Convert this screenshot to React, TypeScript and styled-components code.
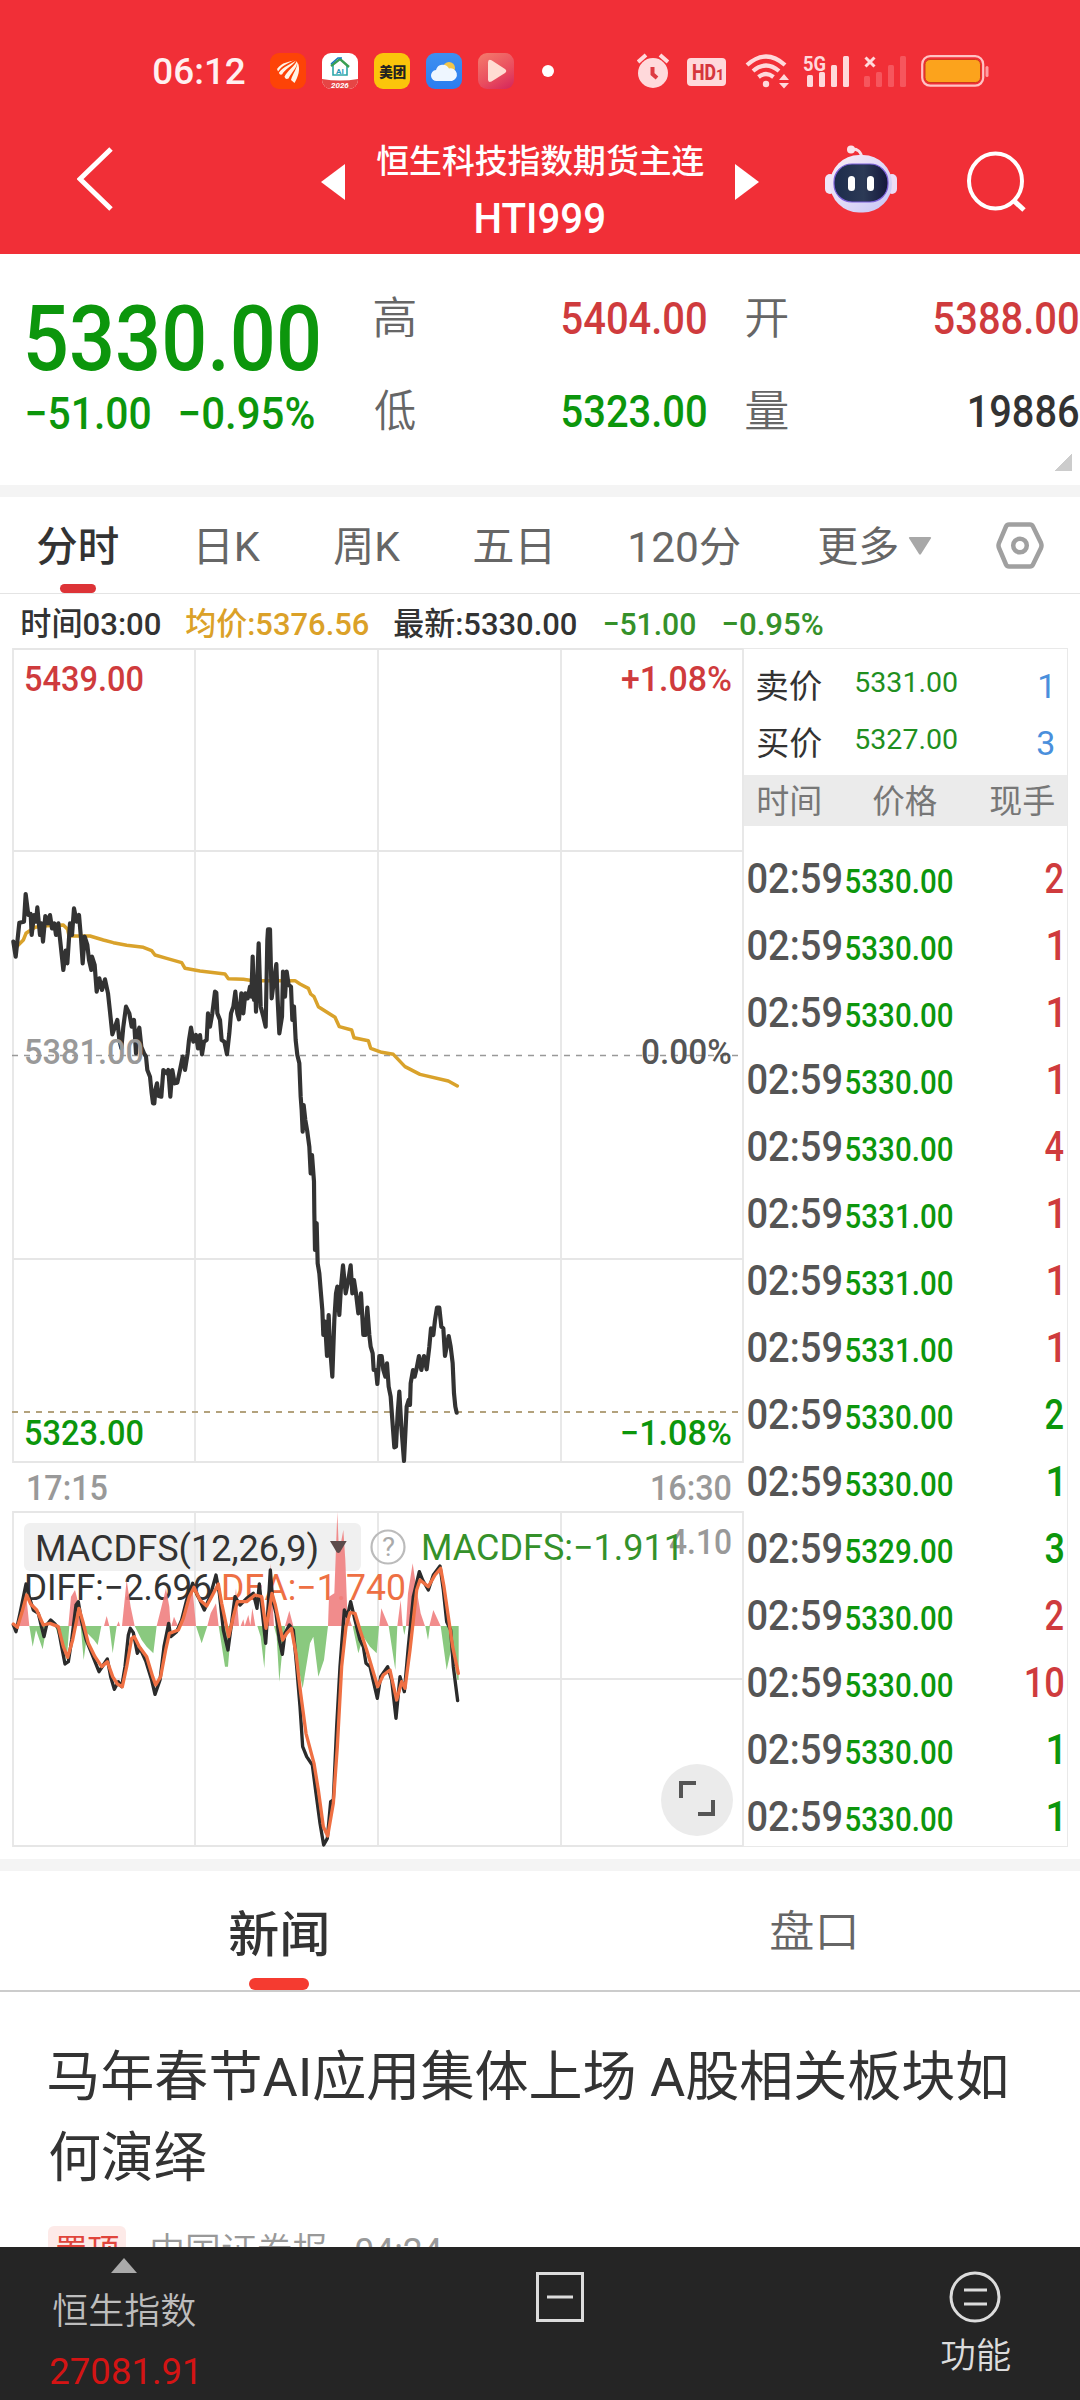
import React, { useLayoutEffect, useState } from "react";
import styled, { createGlobalStyle } from "styled-components";

const FONT = `Roboto, "Noto Sans CJK SC", sans-serif`;
const RED = "#cf3b3d";
const GREEN = "#0c960c";
const INK = "#333333";
const GREY = "#666666";

const Global = createGlobalStyle`
  * { box-sizing: border-box; }
  body { margin: 0; background: #fff; font-family: ${FONT}; }
  svg { display: block; }
`;

/* ---------- text set to a fixed ink width ---------- */

const FitBox = styled.span<{ $w: number; $size: number; $weight: number; $color: string; $ml: number; $lift: number }>`
  display: block;
  flex: none;
  width: ${(p) => p.$w}px;
  height: ${(p) => Math.round(p.$size * 1.2)}px;
  line-height: ${(p) => Math.round(p.$size * 1.2)}px;
  margin-left: ${(p) => p.$ml}px;
  margin-bottom: ${(p) => p.$lift}px;
  font-size: ${(p) => p.$size}px;
  font-weight: ${(p) => p.$weight};
  color: ${(p) => p.$color};
  white-space: pre;
`;
const FitInner = styled.span`
  display: inline-block;
  transform-origin: 0 50%;
`;

type FitProps = {
  w: number;
  size: number;
  children: string;
  weight?: number;
  color?: string;
  ml?: number;
  lift?: number;
};

function Fit({ w, size, children, weight = 400, color = INK, ml = 0, lift = 0 }: FitProps) {
  const [fit, setFit] = useState({ k: 1, dx: 0 });
  useLayoutEffect(() => {
    const ctx = document.createElement("canvas").getContext("2d");
    if (!ctx) return;
    ctx.font = `${weight} ${size}px ${FONT}`;
    const m = ctx.measureText(children);
    const ink = m.actualBoundingBoxLeft + m.actualBoundingBoxRight;
    const k = w / ink;
    setFit({ k, dx: m.actualBoundingBoxLeft * k + 0.3 });
  }, [w, size, weight, children]);
  return (
    <FitBox $w={w} $size={size} $weight={weight} $color={color} $ml={ml} $lift={lift}>
      <FitInner style={{ transform: `translate(${fit.dx}px, 1.4px) scaleX(${fit.k})` }}>
        {children}
      </FitInner>
    </FitBox>
  );
}

/* ---------- page frame ---------- */

const Page = styled.div`
  width: 1080px;
  height: 2400px;
  display: flex;
  flex-direction: column;
  overflow: hidden;
  background: #fff;
`;
const Band = styled.div`
  flex: none;
  height: 12px;
  background: #f4f4f4;
`;

/* ---------- header ---------- */

const Header = styled.header`
  flex: none;
  height: 254px;
  background: #f12f37;
`;
const StatusBar = styled.div`
  height: 96px;
  padding: 46px 0 0 153px;
  display: flex;
  align-items: center;
`;
const AppIcons = styled.div`
  display: flex;
  gap: 16px;
  margin-left: 25px;
`;
const AppTile = styled.span<{ $bg: string }>`
  width: 36px;
  height: 36px;
  border-radius: 9px;
  background: ${(p) => p.$bg};
  display: flex;
  align-items: center;
  justify-content: center;
  overflow: hidden;
`;
const Dot = styled.span`
  width: 12px;
  height: 12px;
  border-radius: 50%;
  background: #fff;
  margin-left: 28px;
`;
const StatusIcons = styled.div`
  display: flex;
  align-items: center;
  margin-left: 83px;
`;
const TitleBar = styled.div`
  height: 158px;
  display: flex;
  align-items: flex-start;
  padding: 45px 0 0 77px;
`;
const TitleText = styled.div`
  width: 390px;
  display: flex;
  flex-direction: column;
  align-items: center;
`;
const Slot = styled.span<{ $ml: number; $mt: number }>`
  flex: none;
  margin: ${(p) => p.$mt}px 0 0 ${(p) => p.$ml}px;
`;

/* ---------- quote ---------- */

const Quote = styled.section`
  flex: none;
  height: 231px;
  display: flex;
`;
const PriceCol = styled.div`
  width: 374px;
  padding: 31px 0 0 27px;
`;
const Changes = styled.div`
  display: flex;
  margin-top: -7px;
`;
const StatsCol = styled.div`
  flex: 1;
  padding-top: 34px;
`;
const StatRow = styled.div`
  height: 60px;
  margin-bottom: 33px;
  display: flex;
  align-items: center;
`;
const Corner = styled.span`
  display: block;
  width: 18px;
  height: 18px;
  margin: -21px 0 0 680px;
  background: linear-gradient(135deg, transparent 50%, #cccccc 50%);
`;

/* ---------- period tabs ---------- */

const PeriodTabs = styled.nav`
  flex: none;
  height: 97px;
  border-bottom: 1px solid #e4e4e4;
  display: flex;
  align-items: flex-start;
  padding: 25px 0 0 37px;
`;
const ActivePeriod = styled.div`
  height: 71px;
  display: flex;
  flex-direction: column;
  align-items: center;
  justify-content: space-between;
`;
const Underline = styled.span<{ $w: number; $h: number; $c: string }>`
  width: ${(p) => p.$w}px;
  height: ${(p) => p.$h}px;
  border-radius: 6px;
  background: ${(p) => p.$c};
`;
const InfoRow = styled.div`
  flex: none;
  height: 54px;
  padding: 4px 0 0 22px;
  display: flex;
  align-items: center;
`;

/* ---------- chart and ticks ---------- */

const Market = styled.section`
  flex: none;
  height: 1211px;
  display: flex;
`;
const ChartPane = styled.div`
  position: relative;
  width: 744px;
`;
const Plot = styled.svg`
  position: relative;
`;
const IndicatorChip = styled.div`
  position: absolute;
  left: 24px;
  top: 875px;
  width: 337px;
  height: 48px;
  border-radius: 6px;
  background: #f0f0f0;
`;
const ExpandButton = styled.button`
  position: absolute;
  left: 661px;
  top: 1116px;
  width: 72px;
  height: 72px;
  padding: 0;
  border: 0;
  border-radius: 50%;
  background: #ebebeb;
`;
const Ticks = styled.div`
  width: 324px;
  height: 1199px;
  border: 1px solid #e9e9e9;
  border-left-width: 0;
`;
const OfferRow = styled.div`
  height: 57px;
  display: flex;
  align-items: center;
  padding-left: 13px;
`;
const Offers = styled.div`
  height: 126px;
  padding-top: 8px;
`;
const TickHead = styled.div`
  height: 51px;
  margin-bottom: 27px;
  background: #ebebeb;
  display: flex;
  align-items: center;
  padding-left: 14px;
`;
const TickRow = styled.div`
  height: 67px;
  padding: 0 4px 0 4px;
  display: flex;
  align-items: baseline;
`;
const Qty = styled.div<{ $inset: number }>`
  flex: 1;
  display: flex;
  justify-content: flex-end;
  padding-right: ${(p) => p.$inset}px;
`;

/* ---------- news ---------- */

const NewsTabs = styled.nav`
  flex: none;
  height: 121px;
  border-bottom: 2px solid #cccccc;
  display: grid;
  grid-template-columns: 557px 1fr;
`;
const NewsTab = styled.div`
  display: flex;
  flex-direction: column;
  align-items: center;
  justify-content: space-between;
  padding-top: 34px;
`;
const Article = styled.article`
  flex: none;
  height: 255px;
  padding: 44px 0 0 49px;
  overflow: hidden;
`;
const HeadLine = styled.div`
  height: 81px;
  display: flex;
  align-items: center;
`;
const Meta = styled.div`
  display: flex;
  align-items: flex-start;
  margin: 28px 0 0 -1px;
`;
const Tag = styled.span`
  width: 78px;
  height: 46px;
  padding: 5px 0 0 8px;
  border-radius: 6px;
  background: #fdeae8;
`;
const MetaText = styled.span`
  display: flex;
  padding-top: 4px;
`;

const Footer = styled.footer`
  flex: none;
  height: 153px;
  background: #252525;
  display: flex;
`;
const FooterItem = styled.div<{ $w: number; $pt: number; $ml: number }>`
  width: ${(p) => p.$w}px;
  margin-left: ${(p) => p.$ml}px;
  padding-top: ${(p) => p.$pt}px;
  display: flex;
  flex-direction: column;
  align-items: center;
`;
const Spacer = styled.span<{ $h: number }>`
  height: ${(p) => p.$h}px;
`;

/* ---------- chart data, in thirds of a pixel ---------- */

const PRICE_A = "40,905 47,950 52,905 58,848 72,845 77,762 85,825 92,822 95,885 102,825 108,845 112,802 120,885 124,850 129,905 136,828 144,850 150,825 156,865 163,850 168,885 175,850 182,915 190,990 197,932 202,970 210,850 216,885 222,805 230,845 237,825 243,895 248,970 254,890 262,915 267,960 274,990 276,950 284,975 290,1055 298,1015 306,1050 315,1018 324,1060 330,1115 337,1183 345,1160 352,1140 358,1200 364,1225 370,1160 378,1100 388,1120 395,1160 402,1140 408,1240 412,1180 418,1163 424,1220 432,1240 438,1250 442,1290 450,1310 455,1360 459,1390 463,1390 466,1350 471,1330 476,1368 484,1370 490,1290 500,1300 505,1290 511,1370 517,1290 524,1330 532,1328 540,1290 548,1250 555,1290 563,1240 567,1200 573,1163 580,1205 588,1185 594,1225 600,1185 606,1243 612,1205 620,1200 624,1120 630,1160 637,1120 645,1055 649,1058 652,1120 660,1140 665,1200 673,1205 681,1243 688,1180 693,1120 700,1100 706,1055 712,1120 717,1138 724,1060 730,1120 736,1060 743,1075 750,1040 754,1070 758,950 762,1080 765,1010 768,1115 776,910 782,1100 790,1130 797,1160 802,900 804,868 810,868 815,1075 822,1020 829,972 833,1080 838,1180 846,1130 849,995 855,1070 860,995 866,1035 873,1040 877,1140 882,1100 887,1200 892,1245 898,1270 902,1370";
const PRICE_B = "902,50 905,90 908,155 911,75 916,120 922,155 928,200 932,280 936,225 942,305 943,400 945,510 950,430 953,550 958,580 962,630 967,690 970,765 975,725 981,828 986,705 990,800 997,890 1003,720 1008,640 1012,620 1018,705 1023,620 1029,556 1037,640 1045,600 1052,556 1057,640 1062,600 1068,640 1075,700 1083,640 1090,765 1096,765 1102,683 1108,765 1112,800 1118,820 1121,870 1128,870 1132,912 1138,828 1145,828 1150,870 1156,890 1161,850 1166,920 1172,950 1177,1020 1183,1102 1188,1100 1193,1000 1198,935 1204,1040 1212,1143 1220,980 1226,960 1230,975 1232,910 1239,870 1244,890 1250,865 1257,828 1264,870 1272,828 1280,868 1288,800 1293,745 1300,765 1305,720 1311,683 1318,683 1324,740 1330,745 1335,828 1340,800 1346,768 1352,800 1358,850 1362,940 1366,980 1370,998";
const shift = (pts: string, dy: number) =>
  pts
    .split(" ")
    .map((p) => {
      const [x, y] = p.split(",").map(Number);
      return `${x},${y + dy}`;
    })
    .join(" ");
const PRICE = `${PRICE_A} ${shift(PRICE_B, 1320)}`;
const AVERAGE = "50,920 58,912 70,900 78,880 105,862 140,857 190,855 203,868 207,888 270,888 310,900 340,908 380,916 430,922 455,932 465,945 500,955 545,968 555,985 600,993 675,1002 685,1016 730,1018 760,1022 885,1022 900,1032 925,1045 932,1062 942,1070 955,1100 1005,1132 1018,1160 1055,1170 1062,1193 1105,1202 1112,1225 1145,1237 1180,1243 1215,1280 1260,1303 1345,1323 1372,1338";
const DIFF = "40,435 48,455 60,400 78,312 88,352 100,390 115,400 122,430 132,470 140,435 152,420 165,432 175,445 185,500 195,552 205,545 215,480 228,375 235,365 245,425 258,478 275,520 297,575 310,555 322,537 332,590 343,628 355,605 365,620 375,560 385,465 391,445 400,458 412,520 420,505 438,545 455,600 465,643 480,600 492,500 506,430 512,470 530,455 545,420 560,360 578,310 590,340 613,390 630,350 648,285 658,340 670,450 684,510 692,450 705,350 720,375 740,355 760,340 771,385 778,312 785,380 797,490 805,370 811,270 818,360 828,400 838,480 847,523 855,460 868,435 880,450 890,560 900,680 908,800 920,830 937,855 948,940 960,1030 971,1095 982,1075 992,965 1000,960 1010,740 1020,560 1033,390 1042,410 1052,365 1065,420 1080,480 1090,500 1098,550 1110,560 1132,655 1142,590 1163,560 1175,600 1188,715 1200,590 1213,635 1225,500 1240,350 1258,275 1268,300 1285,330 1300,285 1320,258 1330,330 1340,425 1352,450 1360,560 1373,662";
const DEA = "40,432 52,442 65,400 80,345 92,372 110,390 130,435 150,430 175,440 190,500 203,532 218,480 237,385 250,430 265,490 285,530 305,560 322,545 338,590 352,612 367,620 380,560 395,475 403,470 418,500 440,530 458,590 467,615 482,590 497,510 508,460 535,450 550,415 568,350 582,322 600,360 620,378 635,350 655,312 665,370 686,470 700,410 712,365 740,365 765,345 785,350 798,445 808,390 816,340 826,375 848,480 860,460 874,445 888,520 902,640 918,760 942,850 955,930 970,1040 983,1068 1000,970 1012,800 1025,560 1038,440 1050,398 1065,400 1080,450 1100,510 1133,620 1150,585 1170,570 1190,660 1205,605 1215,625 1230,510 1250,330 1260,300 1285,320 1305,285 1322,265 1332,320 1345,410 1358,500 1375,580";
const RISING = "50,438 78,340 88,438 205,438 213,350 225,330 238,380 246,438 312,438 320,408 328,438 350,438 356,424 360,438 366,438 380,300 392,380 404,438 470,438 482,390 498,325 508,380 512,438 514,438 522,410 534,438 536,438 560,380 578,330 588,438 622,438 632,400 648,370 656,438 696,438 708,325 717,438 722,438 730,418 734,438 745,405 751,436 757,385 766,438 802,438 811,250 822,438 855,438 868,392 880,438 984,438 987,350 1003,340 1012,96 1017,220 1030,150 1036,240 1042,400 1056,438 1138,438 1144,385 1166,438 1192,438 1202,360 1208,438 1218,438 1224,340 1238,250 1250,330 1262,400 1275,438 1288,438 1300,390 1322,438";
const FALLING = "88,438 98,500 108,450 128,508 140,438 165,438 200,540 208,438 242,438 251,540 262,460 282,480 293,495 304,438 328,438 338,520 350,438 404,438 425,480 440,500 460,520 470,438 588,438 605,490 622,438 656,438 675,560 684,560 694,438 772,438 782,470 793,565 800,438 822,438 830,470 838,605 848,500 856,438 878,438 895,560 908,625 930,490 940,470 955,590 972,540 984,438 1058,438 1075,520 1090,470 1110,500 1130,520 1137,438 1166,438 1186,570 1192,438 1208,438 1213,465 1218,438 1276,438 1284,480 1290,438 1322,438 1340,570 1355,500 1372,600 1376,600 1376,438";

type LabelProps = { x: number; y: number; w: number; size?: number; fill: string; children: string; weight?: number };
const Label = ({ x, y, w, size = 35, fill, children, weight = 500 }: LabelProps) => (
  <text x={x} y={y} textLength={w} lengthAdjust="spacingAndGlyphs" fontFamily={FONT} fontSize={size} fontWeight={weight} fill={fill}>
    {children}
  </text>
);

const Chart = () => (
  <ChartPane>
    <IndicatorChip />
    <Plot width="744" height="1199" viewBox="0 648 744 1199">
      <g stroke="#e6e6e6" strokeWidth="1.8" fill="none">
        <path d="M13 649H743V1462H13ZM13 851H743M13 1259H743M195 649V1462M378 649V1462M561 649V1462" />
        <path d="M13 1512H743V1846H13ZM13 1679H743M195 1512V1846M378 1512V1846M561 1512V1846" />
      </g>
      <path d="M12 1055.5H743" stroke="#999" strokeWidth="1.6" strokeDasharray="6 6" />
      <path d="M12 1412H743" stroke="#b3a27c" strokeWidth="1.8" strokeDasharray="6 6" />
      <g transform="translate(0 640) scale(.33333)" fill="none" strokeLinejoin="round" strokeLinecap="round">
        <polyline points={AVERAGE} stroke="#d9a22b" strokeWidth="10.5" />
        <polyline points={PRICE} stroke="#333" strokeWidth="12.5" />
      </g>
      <Label x={24} y={691} w={120} fill={RED}>5439.00</Label>
      <Label x={621} y={691} w={111} fill={RED}>+1.08%</Label>
      <Label x={24} y={1064} w={120} fill="#999999">5381.00</Label>
      <Label x={641} y={1064} w={91} fill="#555555">0.00%</Label>
      <Label x={24} y={1445} w={120} fill={GREEN}>5323.00</Label>
      <Label x={620} y={1445} w={112} fill={GREEN}>−1.08%</Label>
      <Label x={26} y={1500} w={82} fill="#999999">17:15</Label>
      <Label x={650} y={1500} w={82} fill="#999999">16:30</Label>
      <Label x={669} y={1554} w={63} fill="#999999">4.10</Label>
      <Label x={35} y={1561} w={284} size={36} fill={INK} weight={400}>MACDFS(12,26,9)</Label>
      <Label x={421} y={1560} w={263} size={36} fill="#35912a" weight={400}>MACDFS:−1.911</Label>
      <Label x={24} y={1600} w={188} size={36} fill={INK} weight={400}>DIFF:−2.696</Label>
      <Label x={221} y={1600} w={185} size={36} fill="#ee7044" weight={400}>DEA:−1.740</Label>
      <circle cx="388" cy="1547" r="16.5" fill="none" stroke="#bbb" strokeWidth="2.2" />
      <Label x={382} y={1556} w={13} size={26} fill="#aaaaaa" weight={400}>?</Label>
      <g transform="translate(0 1480) scale(.33333)" fill="none" strokeLinejoin="round" strokeLinecap="round">
        <polygon points={RISING} fill="#f08080" fillOpacity=".9" />
        <polygon points={FALLING} fill="#8ac97f" />
        <path d="M990 183h50l-20 34q-5 4-10 0z" fill="#5c4b4b" />
        <polyline points={DIFF} stroke="#2b2b2b" strokeWidth="10" />
        <polyline points={DEA} stroke="#ef7043" strokeWidth="10" />
      </g>
    </Plot>
    <ExpandButton>
      <svg width="72" height="72" viewBox="0 0 72 72" fill="none" stroke="#555" strokeWidth="4">
        <path d="M20 34V19H35M52 36V50H37" />
      </svg>
    </ExpandButton>
  </ChartPane>
);

/* ---------- icons ---------- */

const Triangle = ({ left }: { left?: boolean }) => (
  <svg width="24" height="36" viewBox="0 0 24 36" fill="#fff">
    <path d={left ? "M24 0V36L0 18Z" : "M0 0V36L24 18Z"} />
  </svg>
);

const Robot = () => (
  <svg width="72" height="68" viewBox="0 0 72 68">
    <defs>
      <linearGradient id="shell" x1="0" y1="0" x2="1" y2="1">
        <stop offset="0" stopColor="#fbeef6" />
        <stop offset=".6" stopColor="#dcd6f6" />
        <stop offset="1" stopColor="#c3c4f6" />
      </linearGradient>
      <linearGradient id="visor" x1="0" y1="0" x2="1" y2="0">
        <stop offset="0" stopColor="#1c2c4c" />
        <stop offset=".55" stopColor="#2c3a56" />
        <stop offset="1" stopColor="#14183c" />
      </linearGradient>
    </defs>
    <path d="M26 4q10-1 11 10" stroke="#f7dfe8" strokeWidth="3" fill="none" />
    <circle cx="26" cy="4.500" r="4" fill="#fbe3ea" />
    <rect x="0" y="29" width="10" height="20" rx="5" fill="#f0e6f8" />
    <rect x="62" y="29" width="10" height="20" rx="5" fill="#ecdcf6" />
    <rect x="5" y="10" width="62" height="57.500" rx="29" fill="url(#shell)" />
    <rect x="9" y="19" width="54" height="38" rx="18" fill="url(#visor)" stroke="#7b5fd8" strokeWidth="1.200" />
    <rect x="23" y="31" width="7" height="15" rx="3.500" fill="#fff" />
    <rect x="42" y="31" width="7" height="15" rx="3.500" fill="#fff" />
  </svg>
);

const PINK = "#ffd9db";

const Status = () => (
  <StatusBar>
    <Fit w={92} size={36} weight={500} color="#fff0f0">06:12</Fit>
    <AppIcons>
      <AppTile $bg="#fd4307">
        <svg width="36" height="36" viewBox="0 0 36 36" fill="#fff4e6">
          <path d="M7 16C12 9 19 9 25 7C18 10 12 12.500 8 18.500Z" />
          <path d="M9 19.500C14 13 20 12 26 7.500C22 13.500 16 15 12 21.500C10 22 9 21 9 19.500Z" />
          <path d="M14.500 23.500C18 17 24 14 27 8C28 14.500 22 18.500 18.500 25.500C16 26.500 15 25.500 14.500 23.500Z" />
          <path d="M21 27C22.500 21 27 16 27.500 9C31 16 28 24 24.500 30Z" />
        </svg>
      </AppTile>
      <AppTile $bg="#ffffff">
        <svg width="36" height="36" viewBox="0 0 36 36" fill="none">
          <path d="M11 12V22H25V13" stroke="#2ba7a8" strokeWidth="1.600" />
          <path d="M9 13L18 6L27 14" stroke="#3a9f52" strokeWidth="2.400" />
          <path d="M9 11L16 5H20" stroke="#1779bd" strokeWidth="1.600" />
          <text x="14" y="21" fontSize="8" fontFamily={FONT} fontWeight="700" fill="#2a96b8">AI</text>
          <path d="M0 26Q18 29 36 26V36H0Z" fill="#e64545" />
          <text x="9" y="34.500" fontSize="8" fontFamily={FONT} fontStyle="italic" fontWeight="700" fill="#fff">2026</text>
        </svg>
      </AppTile>
      <AppTile $bg="#fbc50b">
        <Fit w={27} size={14} weight={900} color="#222">美团</Fit>
      </AppTile>
      <AppTile $bg="linear-gradient(#3f8ff0, #2a7df0)">
        <svg width="36" height="36" viewBox="0 0 36 36">
          <circle cx="23" cy="15" r="6" fill="#f3c64a" />
          <path d="M11 28a5.500 5.500 0 0 1-1-11a7 7 0 0 1 13-1.500a6.300 6.300 0 0 1 3 12.500z" fill="#eef6ff" />
        </svg>
      </AppTile>
      <AppTile $bg="linear-gradient(150deg, #f47c6c, #e94c5e 60%, #d3245c)">
        <svg width="36" height="36" viewBox="0 0 36 36">
          <path d="M10 9.500q0-4 3.500-2.300L27 16q2.500 2 0 4L13.500 28.500Q10 30 10 26.500Z" fill="#ffdcd2" />
        </svg>
      </AppTile>
    </AppIcons>
    <Dot />
    <StatusIcons>
      <svg width="32" height="36" viewBox="0 0 32 36">
        <circle cx="16" cy="20" r="15" fill={PINK} />
        <path d="M1 9L9 2M31 9L23 2" stroke={PINK} strokeWidth="4" />
        <path d="M15.500 14V21L20 25" stroke="#dd3a42" strokeWidth="4" fill="none" />
      </svg>
      <Slot $ml={18} $mt={1}>
        <svg width="40" height="28" viewBox="0 0 40 28">
          <rect width="39" height="28" rx="4" fill={PINK} />
          <text x="5" y="22" fontSize="22" fontFamily={FONT} fontWeight="800" fill="#d6363e" textLength="24" lengthAdjust="spacingAndGlyphs">HD</text>
          <text x="29" y="22" fontSize="14" fontFamily={FONT} fontWeight="800" fill="#d6363e">1</text>
        </svg>
      </Slot>
      <Slot $ml={18} $mt={0}>
        <svg width="45" height="36" viewBox="0 0 45 36" fill="none" stroke={PINK} strokeWidth="4.200">
          <path d="M2 12Q21 -5 40 12M8 18Q21 7 34 18M13.500 24Q21 18 28.500 24" />
          <circle cx="21" cy="31" r="3.200" fill={PINK} stroke="none" />
          <path d="M34 27L39 21L44 27ZM34 30L39 35.500L44 30Z" fill={PINK} stroke="none" />
        </svg>
      </Slot>
      <Slot $ml={13} $mt={0}>
        <svg width="47" height="34" viewBox="0 0 47 34" fill={PINK}>
          <text x="0" y="16.500" fontSize="20" fontFamily={FONT} fontWeight="700" fill={PINK} textLength="23" lengthAdjust="spacingAndGlyphs">5G</text>
          <rect x="4" y="21" width="6" height="12" rx="1.500" />
          <rect x="16" y="18" width="6" height="15" rx="1.500" />
          <rect x="28" y="11" width="6" height="22" rx="1.500" />
          <rect x="40" y="2" width="6" height="31" rx="1.500" />
        </svg>
      </Slot>
      <Slot $ml={14} $mt={0}>
        <svg width="44" height="34" viewBox="0 0 44 34" fill="#f6565d">
          <path d="M1.500 3.500L10.500 12.500M10.500 3.500L1.500 12.500" stroke={PINK} strokeWidth="3" />
          <rect x="0" y="22" width="6" height="11" rx="1.500" />
          <rect x="12" y="18" width="6" height="15" rx="1.500" />
          <rect x="24" y="11" width="6" height="22" rx="1.500" />
          <rect x="36" y="2" width="6" height="31" rx="1.500" />
        </svg>
      </Slot>
      <Slot $ml={13} $mt={0}>
        <svg width="68" height="32" viewBox="0 0 68 32">
          <rect x="1.200" y="1.200" width="61" height="29.500" rx="8" fill="none" stroke="#ffc3c4" strokeWidth="2.200" />
          <rect x="4" y="4.500" width="55.500" height="23" rx="5" fill="#fca31c" stroke="#d03a1e" strokeWidth="1" />
          <rect x="64.500" y="11" width="3" height="11" rx="1.500" fill="#ff9da1" />
        </svg>
      </Slot>
    </StatusIcons>
  </StatusBar>
);

/* ---------- data ---------- */

const TRADES: [string, string, boolean][] = [
  ["5330.00", "2", true],
  ["5330.00", "1", true],
  ["5330.00", "1", true],
  ["5330.00", "1", true],
  ["5330.00", "4", true],
  ["5331.00", "1", true],
  ["5331.00", "1", true],
  ["5331.00", "1", true],
  ["5330.00", "2", false],
  ["5330.00", "1", false],
  ["5329.00", "3", false],
  ["5330.00", "2", true],
  ["5330.00", "10", true],
  ["5330.00", "1", false],
  ["5330.00", "1", false],
];
const QTY_WIDTH: Record<string, number> = { "1": 12, "10": 37 };

export default function App() {
  return (
    <Page>
      <Global />
      <Header>
        <Status />
        <TitleBar>
          <Slot $ml={0} $mt={6}>
            <svg width="36" height="64" viewBox="0 0 36 64" fill="none" stroke="#fff" strokeWidth="5">
              <path d="M34 2L3 32L34 62" />
            </svg>
          </Slot>
          <Slot $ml={208} $mt={23}><Triangle left /></Slot>
          <TitleText>
            <Fit w={328} size={33} weight={500} color="#fff">恒生科技指数期货主连</Fit>
            <Spacer $h={12} />
            <Fit w={128} size={42} weight={500} color="#fff">HTI999</Fit>
          </TitleText>
          <Slot $ml={0} $mt={23}><Triangle /></Slot>
          <Slot $ml={66} $mt={4}><Robot /></Slot>
          <Slot $ml={69} $mt={9}>
            <svg width="62" height="64" viewBox="0 0 62 64" fill="none" stroke="#fff" strokeWidth="4">
              <ellipse cx="29.500" cy="31" rx="26.500" ry="27.500" />
              <path d="M47 50L58 60" strokeWidth="5" />
            </svg>
          </Slot>
        </TitleBar>
      </Header>

      <Quote>
        <PriceCol>
          <Fit w={291} size={90} weight={500} color={GREEN}>5330.00</Fit>
          <Changes>
            <Fit w={123} size={45} weight={500} color={GREEN}>−51.00</Fit>
            <Fit w={134} size={45} weight={500} color={GREEN} ml={30}>−0.95%</Fit>
          </Changes>
        </PriceCol>
        <StatsCol>
          <StatRow>
            <Fit w={41} size={44} weight={350} color={GREY}>高</Fit>
            <Fit w={144} size={45} weight={500} color={RED} ml={147}>5404.00</Fit>
            <Fit w={41} size={44} weight={350} color={GREY} ml={40}>开</Fit>
            <Fit w={144} size={45} weight={500} color={RED} ml={147}>5388.00</Fit>
          </StatRow>
          <StatRow>
            <Fit w={41} size={44} weight={350} color={GREY}>低</Fit>
            <Fit w={144} size={45} weight={500} color={GREEN} ml={147}>5323.00</Fit>
            <Fit w={41} size={44} weight={350} color={GREY} ml={40}>量</Fit>
            <Fit w={109} size={45} weight={500} color={INK} ml={182}>19886</Fit>
          </StatRow>
          <Corner />
        </StatsCol>
      </Quote>
      <Band />

      <PeriodTabs>
        <ActivePeriod>
          <Fit w={81} size={41} weight={500}>分时</Fit>
          <Underline $w={36} $h={9} $c="#dd3337" />
        </ActivePeriod>
        <Fit w={61} size={41} color={GREY} ml={81}>日K</Fit>
        <Fit w={66} size={41} color={GREY} ml={74}>周K</Fit>
        <Fit w={76} size={41} color={GREY} ml={74}>五日</Fit>
        <Fit w={110} size={42} color={GREY} ml={80}>120分</Fit>
        <Fit w={79} size={41} color={GREY} ml={78}>更多</Fit>
        <Slot $ml={11} $mt={14}>
          <svg width="24" height="20" viewBox="0 0 24 20" fill="#a8a8a8">
            <path d="M2 1H22Q24 1 22.500 3L13 18Q12 19.500 11 18L1.500 3Q0 1 2 1Z" />
          </svg>
        </Slot>
        <Slot $ml={64} $mt={0}>
          <svg width="48" height="48" viewBox="0 0 48 48" fill="none" stroke="#a0a0a0" strokeWidth="4.500">
            <path d="M13 2.500H34Q36 2.500 37 4.500L45 21Q46 23.500 45 26L37 42.500Q36 44.500 34 44.500H13Q11 44.500 10 42.500L3 26Q2 23.500 3 21L10 4.500Q11 2.500 13 2.500Z" />
            <circle cx="24" cy="23.500" r="6.800" />
          </svg>
        </Slot>
      </PeriodTabs>
      <InfoRow>
        <Fit w={138} size={32} weight={500}>时间03:00</Fit>
        <Fit w={182} size={32} weight={500} color="#dba128" ml={26}>均价:5376.56</Fit>
        <Fit w={182} size={32} weight={500} ml={26}>最新:5330.00</Fit>
        <Fit w={91} size={32} weight={500} color="#35912a" ml={28}>−51.00</Fit>
        <Fit w={100} size={32} weight={500} color="#35912a" ml={28}>−0.95%</Fit>
      </InfoRow>

      <Market>
        <Chart />
        <Ticks>
          <Offers>
            <OfferRow>
              <Fit w={64} size={33}>卖价</Fit>
              <Fit w={101} size={28} color="#1f8f1f" ml={35} lift={7}>5331.00</Fit>
              <Fit w={11} size={34} color="#4a8fdc" ml={82}>1</Fit>
            </OfferRow>
            <OfferRow>
              <Fit w={64} size={33}>买价</Fit>
              <Fit w={101} size={28} color="#1f8f1f" ml={35} lift={7}>5327.00</Fit>
              <Fit w={16} size={34} color="#4a8fdc" ml={80}>3</Fit>
            </OfferRow>
          </Offers>
          <TickHead>
            <Fit w={62} size={33} color="#777">时间</Fit>
            <Fit w={64} size={33} color="#777" ml={53}>价格</Fit>
            <Fit w={64} size={33} color="#777" ml={53}>现手</Fit>
          </TickHead>
          {TRADES.map(([price, qty, up], i) => (
            <TickRow key={i}>
              <Fit w={93} size={42} weight={500} color="#555">02:59</Fit>
              <Fit w={106} size={34} weight={500} color={GREEN} ml={5}>{price}</Fit>
              <Qty $inset={qty === "1" ? 3 : 0}>
                <Fit w={QTY_WIDTH[qty] ?? 18} size={42} weight={500} color={up ? RED : GREEN}>{qty}</Fit>
              </Qty>
            </TickRow>
          ))}
        </Ticks>
      </Market>
      <Band />

      <NewsTabs>
        <NewsTab>
          <Fit w={98} size={49} weight={500} ml={-2}>新闻</Fit>
          <Underline $w={60} $h={12} $c="#f53b30" />
        </NewsTab>
        <NewsTab>
          <Fit w={84} size={43} weight={350} color={GREY} ml={-14}>盘口</Fit>
        </NewsTab>
      </NewsTabs>
      <Article>
        <HeadLine><Fit w={956} size={54}>马年春节AI应用集体上场 A股相关板块如</Fit></HeadLine>
        <HeadLine><Fit w={157} size={54}>何演绎</Fit></HeadLine>
        <Meta>
          <Tag><Fit w={62} size={32} color="#e0453c">置顶</Fit></Tag>
          <MetaText>
            <Fit w={175} size={36} weight={350} color="#999" ml={26}>中国证券报</Fit>
            <Fit w={86} size={36} weight={400} color="#999" ml={29}>04:24</Fit>
          </MetaText>
        </Meta>
      </Article>

      <Footer>
        <FooterItem $w={148} $pt={11} $ml={50}>
          <svg width="26" height="15" viewBox="0 0 26 15" fill="#aaa"><path d="M13 0L26 15H0Z" /></svg>
          <Spacer $h={17} />
          <Fit w={142} size={36} weight={350} color="#bdbdbd">恒生指数</Fit>
          <Spacer $h={17} />
          <Fit w={145} size={36} color="#d41414" ml={-3}>27081.91</Fit>
        </FooterItem>
        <FooterItem $w={50} $pt={24} $ml={337}>
          <svg width="50" height="52" viewBox="0 0 50 52" fill="none" stroke="#dcdcdc" strokeWidth="3">
            <path d="M2.500 2.500H47.500V49.500H2.500ZM12 26H38" />
          </svg>
        </FooterItem>
        <FooterItem $w={80} $pt={24} $ml={350}>
          <svg width="52" height="52" viewBox="0 0 52 52" fill="none" stroke="#dcdcdc" strokeWidth="3">
            <circle cx="26" cy="26" r="24" />
            <path d="M15 19H38M15 33H38" />
          </svg>
          <Spacer $h={12} />
          <Fit w={69} size={35} weight={350} color="#dcdcdc">功能</Fit>
        </FooterItem>
      </Footer>
    </Page>
  );
}
